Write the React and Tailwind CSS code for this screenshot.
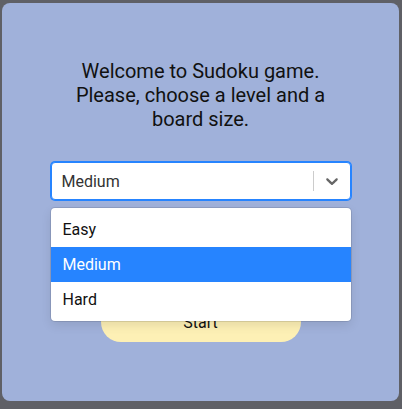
import React from "react";

const font = { fontFamily: "Roboto, 'Liberation Sans', sans-serif" };

function Chevron() {
  return (
    <svg viewBox="0 0 20 20" width="20" height="20" fill="currentColor">
      <path d="M4.516 7.548c0.436-0.446 1.043-0.481 1.576 0l3.908 3.747 3.908-3.747c0.533-0.481 1.141-0.446 1.574 0 0.436 0.445 0.408 1.197 0 1.615-0.406 0.418-4.695 4.502-4.695 4.502-0.217 0.223-0.502 0.335-0.787 0.335s-0.57-0.112-0.789-0.335c0 0-4.287-4.084-4.695-4.502s-0.436-1.17 0-1.615z" />
    </svg>
  );
}

function Select({ value, focused, options, selected }) {
  return (
    <div className="relative w-[300px]">
      <div
        className={`flex h-[38px] items-center rounded-[4px] border bg-white ${
          focused ? "border-[#2684ff] shadow-[0_0_0_1px_#2684ff]" : "border-[#cccccc]"
        }`}
      >
        <div className="flex-1 px-2 py-[2px]">
          <span className="mx-[2px] text-[16px] text-[#333333]">{value}</span>
        </div>
        <div className="flex items-center self-stretch">
          <span className="my-2 w-px self-stretch bg-[#cccccc]" />
          <div className={`p-2 ${focused ? "text-[#666666]" : "text-[#cccccc]"}`}>
            <Chevron />
          </div>
        </div>
      </div>

      {/* menu */}
      {options && (
        <div className="absolute left-0 top-[calc(100%+8px)] z-10 w-full rounded-[4px] bg-white py-1 shadow-[0_0_0_1px_rgba(0,0,0,0.1),0_4px_11px_rgba(0,0,0,0.1)]">
          {options.map((opt) => (
            <div
              key={opt}
              className={`px-3 py-2 text-[16px] ${
                opt === selected ? "bg-[#2684ff] text-white" : "text-[#111111]"
              }`}
            >
              {opt}
            </div>
          ))}
        </div>
      )}
    </div>
  );
}

export default function App() {
  return (
    <div className="h-[409px] w-[402px] overflow-hidden bg-[#5f6066] pl-[2px] pt-[3px] leading-[normal]" style={font}>
      <div className="flex h-[398px] w-[397px] flex-col items-center rounded-lg bg-[#a0b1da] pt-[56px]">
        <h1 className="w-[280px] text-center text-[20px] font-normal leading-[normal] text-[#111111]">
          Welcome to Sudoku game. Please, choose a level and a board size.
        </h1>

        <div className="relative z-10 mt-[31px]">
          <Select
            value="Medium"
            focused
            options={["Easy", "Medium", "Hard"]}
            selected="Medium"
          />
        </div>

        <div className="mt-4">
          <Select value="" />
        </div>

        <button className="mt-[48px] h-[40px] w-[200px] rounded-[20px] bg-[#fdf0b5] text-[16px] text-[#111111]">
          Start
        </button>
      </div>
    </div>
  );
}
